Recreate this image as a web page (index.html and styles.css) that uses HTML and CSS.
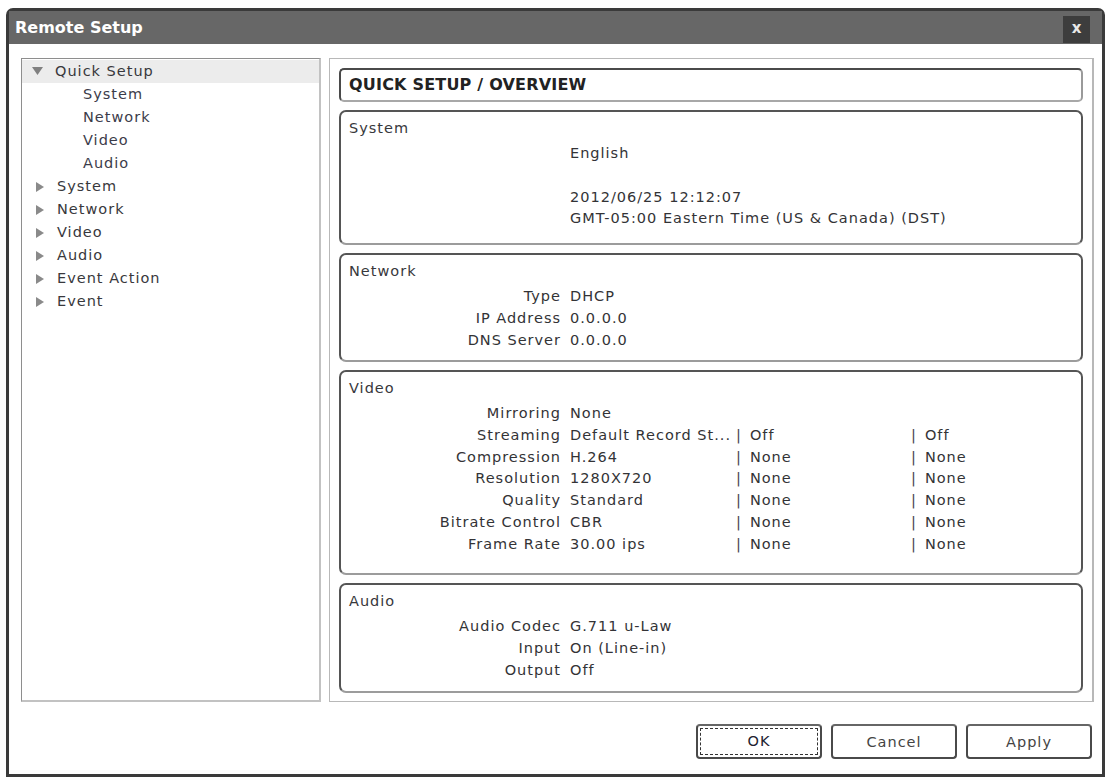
FILE: index.html
```html
<!DOCTYPE html>
<html lang="en">
<head>
<meta charset="utf-8">
<title>Remote Setup</title>
<link rel="stylesheet" href="styles.css">
</head>
<body>
<div class="window">
  <div class="titlebar">
    <span class="title">Remote Setup</span>
    <span class="close">x</span>
  </div>

  <div class="main">
    <nav class="tree">
      <div class="tree-item tree-item--open tree-item--selected">
        <svg class="arrow" width="11" height="9" viewBox="0 0 11 9"><polygon points="0,0 11,0 5.5,8" /></svg>
        <span>Quick Setup</span>
      </div>
      <div class="tree-sub">System</div>
      <div class="tree-sub">Network</div>
      <div class="tree-sub">Video</div>
      <div class="tree-sub">Audio</div>
      <div class="tree-item">
        <svg class="arrow" width="11" height="10" viewBox="0 0 11 10"><polygon points="1,0 9,5 1,10" /></svg>
        <span>System</span>
      </div>
      <div class="tree-item">
        <svg class="arrow" width="11" height="10" viewBox="0 0 11 10"><polygon points="1,0 9,5 1,10" /></svg>
        <span>Network</span>
      </div>
      <div class="tree-item">
        <svg class="arrow" width="11" height="10" viewBox="0 0 11 10"><polygon points="1,0 9,5 1,10" /></svg>
        <span>Video</span>
      </div>
      <div class="tree-item">
        <svg class="arrow" width="11" height="10" viewBox="0 0 11 10"><polygon points="1,0 9,5 1,10" /></svg>
        <span>Audio</span>
      </div>
      <div class="tree-item">
        <svg class="arrow" width="11" height="10" viewBox="0 0 11 10"><polygon points="1,0 9,5 1,10" /></svg>
        <span>Event Action</span>
      </div>
      <div class="tree-item">
        <svg class="arrow" width="11" height="10" viewBox="0 0 11 10"><polygon points="1,0 9,5 1,10" /></svg>
        <span>Event</span>
      </div>
    </nav>

    <section class="content">
      <div class="heading">QUICK SETUP / OVERVIEW</div>

      <div class="box box--system">
        <div class="box-title">System</div>
        <div class="row"><span class="label"></span><span class="value">English</span></div>
        <div class="row"><span class="label"></span><span class="value"></span></div>
        <div class="row"><span class="label"></span><span class="value">2012/06/25 12:12:07</span></div>
        <div class="row"><span class="label"></span><span class="value">GMT-05:00 Eastern Time (US &amp; Canada) (DST)</span></div>
      </div>

      <div class="box box--network">
        <div class="box-title">Network</div>
        <div class="row"><span class="label">Type</span><span class="value">DHCP</span></div>
        <div class="row"><span class="label">IP Address</span><span class="value">0.0.0.0</span></div>
        <div class="row"><span class="label">DNS Server</span><span class="value">0.0.0.0</span></div>
      </div>

      <div class="box box--video">
        <div class="box-title">Video</div>
        <div class="row"><span class="label">Mirroring</span><span class="value">None</span></div>
        <div class="row"><span class="label">Streaming</span><span class="value">Default Record St...</span><span class="cell"><span class="bar">|</span>Off</span><span class="cell"><span class="bar">|</span>Off</span></div>
        <div class="row"><span class="label">Compression</span><span class="value">H.264</span><span class="cell"><span class="bar">|</span>None</span><span class="cell"><span class="bar">|</span>None</span></div>
        <div class="row"><span class="label">Resolution</span><span class="value">1280X720</span><span class="cell"><span class="bar">|</span>None</span><span class="cell"><span class="bar">|</span>None</span></div>
        <div class="row"><span class="label">Quality</span><span class="value">Standard</span><span class="cell"><span class="bar">|</span>None</span><span class="cell"><span class="bar">|</span>None</span></div>
        <div class="row"><span class="label">Bitrate Control</span><span class="value">CBR</span><span class="cell"><span class="bar">|</span>None</span><span class="cell"><span class="bar">|</span>None</span></div>
        <div class="row"><span class="label">Frame Rate</span><span class="value">30.00 ips</span><span class="cell"><span class="bar">|</span>None</span><span class="cell"><span class="bar">|</span>None</span></div>
      </div>

      <div class="box box--audio">
        <div class="box-title">Audio</div>
        <div class="row"><span class="label">Audio Codec</span><span class="value">G.711 u-Law</span></div>
        <div class="row"><span class="label">Input</span><span class="value">On (Line-in)</span></div>
        <div class="row"><span class="label">Output</span><span class="value">Off</span></div>
      </div>
    </section>
  </div>

  <div class="footer">
    <button class="btn btn--default"><span class="btn-focus">OK</span></button>
    <button class="btn">Cancel</button>
    <button class="btn">Apply</button>
  </div>
</div>
</body>
</html>
```

FILE: styles.css
```css
html, body {
  margin: 0;
  background: #ffffff;
}

body {
  font-family: "DejaVu Sans", "Liberation Sans", sans-serif;
  font-size: 14.5px;
  letter-spacing: 1px;
  color: #333336;
}

/* dialog frame */
.window {
  box-sizing: border-box;
  margin: 8px 4px 0 6px;
  height: 769px;
  border: 3px solid #3a3a3a;
  border-radius: 7px 7px 0 0;
  background: #ffffff;
  display: flex;
  flex-direction: column;
}

.titlebar {
  height: 33px;
  flex: none;
  background: #676767;
  display: flex;
  align-items: flex-start;
  justify-content: space-between;
  padding: 0 12px 0 6px;
}

.title {
  font-weight: bold;
  font-size: 16px;
  letter-spacing: 0;
  color: #ffffff;
  line-height: 33px;
}

.close {
  margin-top: 5px;
  width: 27px;
  height: 27px;
  background: #3d3d3d;
  color: #e8e8e8;
  font-weight: bold;
  font-size: 15px;
  letter-spacing: 0;
  line-height: 25px;
  text-align: center;
}

/* two-column body */
.main {
  display: flex;
  gap: 8px;
  padding: 14px 8px 0 12px;
  height: 644px;
}

.tree {
  box-sizing: border-box;
  width: 300px;
  flex: none;
  border: 1px solid #8e8e8e;
  border-right: 2px solid #c2c2c2;
  border-bottom: 2px solid #c2c2c2;
  padding-top: 1px;
}

.tree-item,
.tree-sub {
  height: 23px;
  line-height: 23px;
  white-space: nowrap;
}

.tree-item {
  display: flex;
  align-items: center;
  padding-left: 13px;
  color: #38383c;
}

.tree-item .arrow {
  width: 11px;
  margin-right: 11px;
  fill: #8a8a8a;
}

.tree-item--open .arrow {
  margin-left: -3px;
  margin-right: 12px;
  fill: #808080;
}

.tree-item--selected {
  background: #ececec;
}

.tree-sub {
  padding-left: 61px;
  color: #3c3c4a;
}

/* overview panel */
.content {
  box-sizing: border-box;
  flex: 1;
  border: 1px solid #b8b8b8;
  border-right-width: 2px;
  padding: 9px 9px 7px 9px;
  display: flex;
  flex-direction: column;
  gap: 8px;
}

.heading {
  box-sizing: border-box;
  height: 34px;
  flex: none;
  border: 2px solid #4a4a4a;
  border-right-color: #9a9a9a;
  border-bottom-color: #a8a8a8;
  border-radius: 5px;
  padding-left: 8px;
  font-weight: bold;
  font-size: 16px;
  letter-spacing: 0.2px;
  line-height: 30px;
  color: #222222;
}

.box {
  box-sizing: border-box;
  flex: none;
  border: 2px solid #555555;
  border-bottom-color: #9c9c9c;
  border-radius: 7px;
  padding: 5px 0 0 8px;
}

.box--system { height: 135px; }
.box--network { height: 109px; }
.box--video { height: 205px; }
.box--audio { height: 110px; }

.box-title {
  line-height: 22px;
  margin-bottom: 4px;
  color: #38383c;
}

.row {
  display: grid;
  grid-template-columns: 212px 175px 175px 1fr;
  height: 21.8px;
  line-height: 21.8px;
  white-space: nowrap;
}

.label {
  text-align: right;
}

.value {
  padding-left: 9px;
}

.bar {
  margin-right: 8px;
  color: #444450;
}

/* dialog buttons */
.footer {
  display: flex;
  justify-content: flex-end;
  gap: 9px;
  padding: 22px 10px 0 0;
}

.btn {
  box-sizing: border-box;
  width: 126px;
  height: 35px;
  background: #ffffff;
  border: 2px solid #4a4a4a;
  border-top-color: #666666;
  border-radius: 4px;
  font-family: "DejaVu Sans", "Liberation Sans", sans-serif;
  font-size: 14.5px;
  letter-spacing: 1px;
  color: #444444;
  padding: 0;
}

.btn--default {
  padding: 2px;
}

.btn-focus {
  display: block;
  height: 100%;
  box-sizing: border-box;
  border: 1px dashed #333333;
  line-height: 25px;
  color: #222230;
}
```
